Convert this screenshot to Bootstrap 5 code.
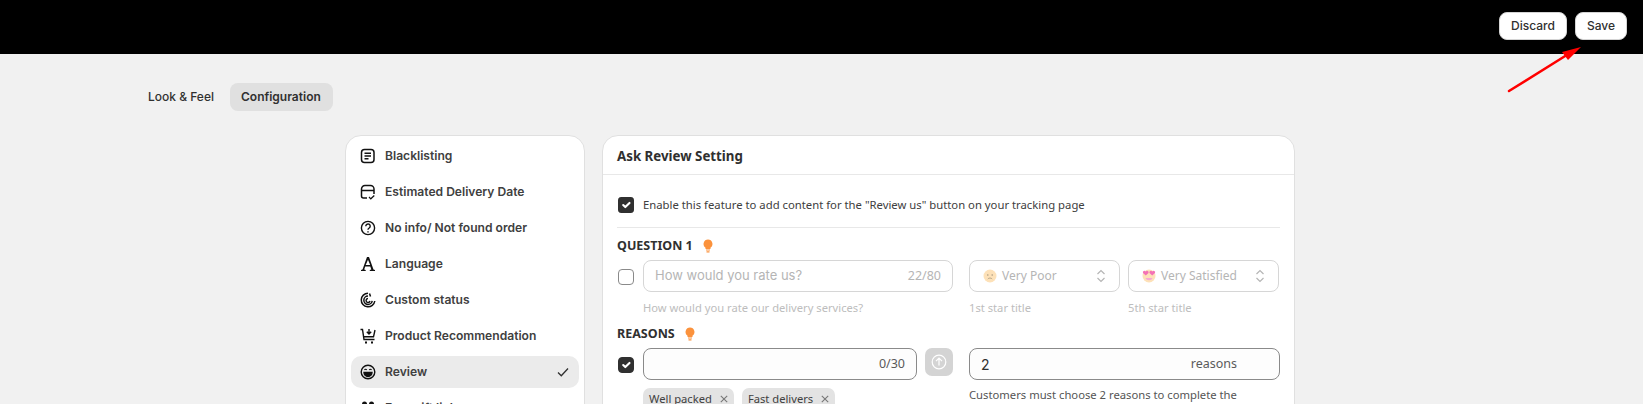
<!DOCTYPE html>
<html lang="en">
<head>
    <meta charset="UTF-8">
    <meta name="viewport" content="width=device-width, initial-scale=1.0">
    <title>Ask Review Setting</title>
    <link href="https://cdn.jsdelivr.net/npm/bootstrap@5.3.0/dist/css/bootstrap.min.css" rel="stylesheet">
    <style>
        html, body { height: 404px; overflow: hidden; }
        body { background-color: #f1f1f1; font-family: "Inter", sans-serif; color: #303030; position: relative; }
        .top-strip { height: 54px; background: #000; padding: 12px 16px 0 0; }
        .save-btn { height: 28px; padding: 0 11px; font-size: 12px; font-weight: 500; line-height: 26px; background: #fff; color: #303030; border: 1px solid #d4d4d4; border-radius: 8px; font-family: "Inter", sans-serif; }
        .tab-row { padding: 29px 0 0 132px; }
        .tab-pill { height: 28px; padding: 0 12px 0 11px; font-size: 12px; font-weight: 500; line-height: 28px; border-radius: 8px; color: #303030; }
        .tab-pill.on { background: #e0e0e0; font-weight: 600; }
        .tab-pill.plain { padding: 0 16px; }
        .page-cols { padding: 24px 0 0 345px; gap: 17px; }
        .side-box { width: 240px; flex: none; padding: 2px 5px; background: #fff; border: 1px solid #e0e0e0; border-radius: 16px; height: 500px; }
        .side-item { height: 36px; padding: 0 10px 0 9px; gap: 9px; font-size: 12.1px; font-weight: 600; color: #404040; border-radius: 10px; }
        .side-item.on { height: 32px; margin: 2px 0; background: #ebebeb; }
        .side-item svg { flex: none; }
        .main-box { width: 693px; flex: none; background: #fff; border: 1px solid #e0e0e0; border-radius: 16px; height: 600px; font-family: "Noto Sans", sans-serif; }
        .main-head { height: 39px; padding-left: 14px; font-size: 13.3px; font-weight: 700; line-height: 40px; color: #303030; border-bottom: 1px solid #e8e8e8; }
        .main-body { padding: 0 14px; }
        .enable-row { height: 53px; padding: 22px 0 0 1px; gap: 9px; font-size: 11.3px; line-height: 16px; color: #404040; border-bottom: 1px solid #e8e8e8; }
        .tick { width: 16px; height: 16px; flex: none; margin: 0; border-radius: 4px; border: 1px solid #8a8a8a; box-shadow: none !important; }
        .tick:checked { background-color: #303030; border-color: #303030; }
        .sec-title { height: 32px; padding-top: 4px; gap: 10px; font-size: 12.5px; font-weight: 700; color: #303030; line-height: 1; }
        .sec-title.second { height: 33px; padding-top: 5px; }
        .field-row { gap: 16px; }
        .wide-q { width: 336px; flex: none; }
        .line-q { gap: 8px; padding-left: 1px; }
        .line-q .tick { margin: 9px 1px 0 0; }
        .fake-input { height: 32px; border: 1px solid #8a8a8a; border-radius: 8px; padding: 0 11px; font-family: "Inter", sans-serif; font-size: 13px; color: #303030; background: #fdfdfd; }
        .fake-input.off { border-color: #d6d6d6; color: #b5b5b5; background: #fff; }
        .count-txt { font-size: 12.5px; color: #5a5a5a; font-family: "Noto Sans", sans-serif; }
        .off .count-txt { color: #b5b5b5; }
        .sel-wrap { width: 151px; flex: none; }
        .sel-wrap .fake-input { padding: 0 13px; gap: 5px; font-family: "Noto Sans", sans-serif; font-size: 12px; }
        .help-txt { font-size: 11.2px; line-height: 15px; margin-top: 8px; color: #bdbdbd; }
        .up-btn { width: 28px; height: 28px; flex: none; background: #d4d4d4; border-radius: 7px; }
        .chip-row { gap: 8px; padding-left: 26px; margin-top: 8px; }
        .chip-item { height: 22px; padding: 0 6px; gap: 8px; background: #e3e3e3; border-radius: 7px; font-size: 11.2px; color: #404040; white-space: nowrap; }
        .reason-input { font-size: 14px; }
        .reason-input .count-txt { margin-right: 31px; }
        .reason-help { font-size: 11.25px; line-height: 16px; margin-top: 7px; color: #555; width: 300px; }
        .note-arrow { position: absolute; left: 1505px; top: 44px; }
    </style>
</head>
<body>
    <!-- Top bar -->
    <div class="top-strip d-flex justify-content-end gap-2">
        <button type="button" class="save-btn">Discard</button>
        <button type="button" class="save-btn">Save</button>
    </div>

    <!-- Tabs -->
    <div class="tab-row d-flex">
        <div class="tab-pill plain">Look &amp; Feel</div>
        <div class="tab-pill on">Configuration</div>
    </div>

    <div class="page-cols d-flex align-items-start">
        <!-- Sidebar -->
        <div class="side-box">
            <div class="side-item d-flex align-items-center">
                <svg width="16" height="16" viewBox="0 0 16 16" fill="none" stroke="#111" stroke-width="1.5"><rect x="1.5" y="1.5" width="12.5" height="13" rx="3"/><path d="M4.5 5.2h6.5M4.5 8h6.5M4.5 10.8h4"/></svg>
                <span>Blacklisting</span>
            </div>
            <div class="side-item d-flex align-items-center">
                <svg width="16" height="16" viewBox="0 0 16 16" fill="none" stroke="#111" stroke-width="1.5"><path d="M7 14H3.500a2 2 0 0 1-2-2V5a3.500 3.500 0 0 1 3.500-3.500h5.500A3.500 3.500 0 0 1 14 5v5M1.500 6.500H14"/><path d="M9 13l1.800 1.800 3.500-3.300" stroke-width="1.200"/></svg>
                <span>Estimated Delivery Date</span>
            </div>
            <div class="side-item d-flex align-items-center">
                <svg width="16" height="16" viewBox="0 0 16 16" fill="none" stroke="#111" stroke-width="1.4"><circle cx="8" cy="8" r="6.600"/><path d="M5.800 6.200a2.200 2.200 0 1 1 3.400 1.800c-.8.500-1.200 1-1.200 1.800"/><path d="M8 11.200v1.200"/></svg>
                <span>No info/ Not found order</span>
            </div>
            <div class="side-item d-flex align-items-center">
                <svg width="16" height="16" viewBox="0 0 16 16" fill="#111"><path d="M7 1h2l4.500 12.500 1.500.5v1h-5.200v-1l1.500-.5-1-3H5.200l-1 3 1.500.5v1H1v-1l1.500-.5L7 1zm1 2.800L5.700 9h4.500L8 3.800z"/></svg>
                <span>Language</span>
            </div>
            <div class="side-item d-flex align-items-center">
                <svg width="16" height="16" viewBox="0 0 16 16" fill="none" stroke="#111" stroke-width="1.500"><path d="M8 1.200A6.800 6.800 0 1 0 14.800 9"/><path d="M8 4a4.200 4.200 0 1 0 4.200 4.800"/><path d="M8 6.500A2 2 0 1 0 10 9"/><path d="M9.500 1.500l1 3"/></svg>
                <span>Custom status</span>
            </div>
            <div class="side-item d-flex align-items-center">
                <svg width="16" height="17" viewBox="0 0 16 17" fill="none" stroke="#111" stroke-width="1.400"><path d="M.5 1.500h2l1.500 10h10.500M4 8.800h9.500L15 2"/><path d="M9 1v5M6.800 3.800L9 6l2.200-2.200"/><path d="M5 14.500h2M11 14.500h2" stroke-width="2"/></svg>
                <span>Product Recommendation</span>
            </div>
            <div class="side-item on d-flex align-items-center">
                <svg width="16" height="16" viewBox="0 0 16 16" fill="none" stroke="#111" stroke-width="1.400"><circle cx="8" cy="8" r="6.800"/><path d="M4 8.500h8a4 4 0 0 1-8 0z" fill="#111"/><path d="M4.500 6c.5-1 1.700-1 2.200 0M9.300 6c.5-1 1.700-1 2.200 0" stroke-width="1.100"/></svg>
                <span class="flex-grow-1">Review</span>
                <svg width="12" height="12" viewBox="0 0 12 12" fill="none" stroke="#303030" stroke-width="1.300"><path d="M1 6.500l3.300 3.300L11 2.500"/></svg>
            </div>
            <div class="side-item d-flex align-items-center">
                <svg width="16" height="16" viewBox="0 0 16 16" fill="#111"><circle cx="4.500" cy="4" r="2.500"/><circle cx="11.500" cy="4" r="2.500"/><path d="M1 13a3.500 3.500 0 0 1 7 0zM8 13a3.500 3.500 0 0 1 7 0z"/></svg>
                <span>Free gift link</span>
            </div>
        </div>

        <!-- Main panel -->
        <div class="main-box">
            <div class="main-head">Ask Review Setting</div>
            <div class="main-body">
                <div class="enable-row d-flex align-items-start">
                    <input class="form-check-input tick" type="checkbox" checked aria-label="Enable">
                    <span>Enable this feature to add content for the "Review us" button on your tracking page</span>
                </div>

                <div class="sec-title d-flex align-items-center">
                    <span>QUESTION 1</span>
                    <svg width="10" height="14" viewBox="0 0 10 14"><path d="M5 .5a4.500 4.500 0 0 0-2.500 8.200V10h5V8.700A4.500 4.500 0 0 0 5 .5z" fill="#fb923c"/><path d="M3 11h4M3.500 12.800h3" stroke="#fb923c" stroke-width="1.200"/></svg>
                </div>
                <div class="field-row d-flex">
                    <div class="line-q wide-q d-flex">
                        <input class="form-check-input tick" type="checkbox" aria-label="Question 1">
                        <div class="flex-grow-1">
                            <div class="fake-input off d-flex align-items-center justify-content-between">
                                <span>How would you rate us?</span>
                                <span class="count-txt">22/80</span>
                            </div>
                            <div class="help-txt">How would you rate our delivery services?</div>
                        </div>
                    </div>
                    <div class="d-flex gap-2">
                        <div class="sel-wrap">
                            <div class="fake-input off d-flex align-items-center">
                                <svg width="14" height="14" viewBox="0 0 14 14"><circle cx="7" cy="7" r="6.500" fill="#fde1b8"/><circle cx="4.800" cy="6" r=".8" fill="#a89a80"/><circle cx="9.200" cy="6" r=".8" fill="#a89a80"/><path d="M4.800 10c1-1.300 3.400-1.300 4.400 0" fill="none" stroke="#a89a80" stroke-width=".8"/></svg>
                                <span class="flex-grow-1">Very Poor</span>
                                <svg width="10" height="14" viewBox="0 0 10 14" fill="none" stroke="#b5b5b5" stroke-width="1.200"><path d="M1.500 5L5 1.500 8.500 5M1.500 9L5 12.500 8.500 9"/></svg>
                            </div>
                            <div class="help-txt">1st star title</div>
                        </div>
                        <div class="sel-wrap">
                            <div class="fake-input off d-flex align-items-center">
                                <svg width="14" height="14" viewBox="0 0 14 14"><circle cx="7" cy="7" r="6.500" fill="#fde1b8"/><path d="M3.500 9c1 3 6 3 7 0z" fill="#f9a8d4"/><path d="M3.800 6.500L1 4a1.500 1.500 0 0 1 2.800-1.300A1.500 1.500 0 0 1 6.500 4zM10.200 6.500L7.500 4a1.500 1.500 0 0 1 2.700-1.300A1.500 1.500 0 0 1 13 4z" fill="#f472b6"/></svg>
                                <span class="flex-grow-1">Very Satisfied</span>
                                <svg width="10" height="14" viewBox="0 0 10 14" fill="none" stroke="#b5b5b5" stroke-width="1.200"><path d="M1.500 5L5 1.500 8.500 5M1.500 9L5 12.500 8.500 9"/></svg>
                            </div>
                            <div class="help-txt">5th star title</div>
                        </div>
                    </div>
                </div>

                <div class="sec-title second d-flex align-items-center">
                    <span>REASONS</span>
                    <svg width="10" height="14" viewBox="0 0 10 14"><path d="M5 .5a4.500 4.500 0 0 0-2.500 8.200V10h5V8.700A4.500 4.500 0 0 0 5 .5z" fill="#fb923c"/><path d="M3 11h4M3.500 12.800h3" stroke="#fb923c" stroke-width="1.200"/></svg>
                </div>
                <div class="field-row d-flex">
                    <div class="wide-q line-q d-flex">
                        <input class="form-check-input tick" type="checkbox" checked aria-label="Reasons">
                        <div class="fake-input flex-grow-1 d-flex align-items-center justify-content-end">
                            <span class="count-txt">0/30</span>
                        </div>
                        <div class="up-btn d-flex align-items-center justify-content-center">
                            <svg width="16" height="16" viewBox="0 0 16 16" fill="none" stroke="#fff" stroke-width="1.200"><circle cx="8" cy="8" r="6.800"/><path d="M8 11.500v-7M5 7.200l3-3 3 3"/></svg>
                        </div>
                    </div>
                    <div class="fake-input d-flex align-items-center flex-grow-1 reason-input">
                        <span class="flex-grow-1">2</span>
                        <span class="count-txt">reasons</span>
                    </div>
                </div>
                <div class="field-row d-flex">
                    <div class="wide-q chip-row d-flex align-items-start">
                        <div class="chip-item d-flex align-items-center"><span>Well packed</span><svg width="8" height="8" viewBox="0 0 8 8" stroke="#777" stroke-width="1.100"><path d="M.8.800l6.400 6.400M7.200.800L.8 7.200"/></svg></div>
                        <div class="chip-item d-flex align-items-center"><span>Fast delivers</span><svg width="8" height="8" viewBox="0 0 8 8" stroke="#777" stroke-width="1.100"><path d="M.8.800l6.400 6.400M7.200.800L.8 7.200"/></svg></div>
                    </div>
                    <div class="reason-help">Customers must choose 2 reasons to complete the review</div>
                </div>
            </div>
        </div>
    </div>

    <svg class="note-arrow" width="80" height="50" viewBox="0 0 80 50" fill="red"><path d="M4 47L65 9" stroke="red" stroke-width="2.500" stroke-linecap="round"/><path d="M76 3L57 8l6 8z"/></svg>
</body>
</html>
